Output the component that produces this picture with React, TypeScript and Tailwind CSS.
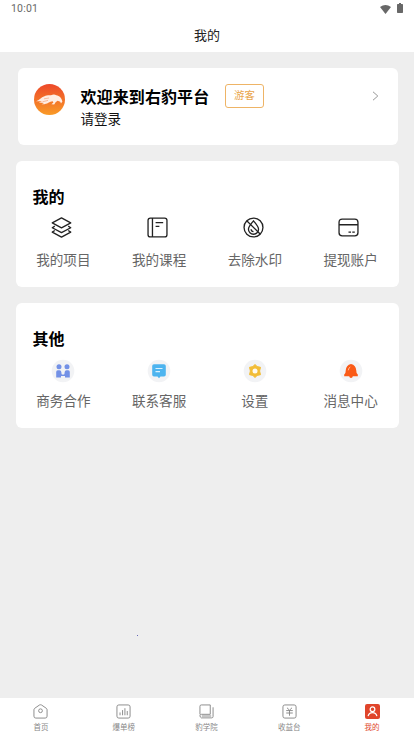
import type { ReactNode } from "react";

const projectItems = [
    {
        label: "我的项目",
        icon: (
            <>
            <path d="M10 .9 18.8 5.6 10 10.3 1.2 5.6Z" />
            <path d="M3.6 8.7 1.2 10.2 10 14.9 18.8 10.2 16.4 8.7" />
            <path d="M3.6 12.9 1.2 14.4 10 19.1 18.8 14.4 16.4 12.9" />
            </>
        ),
    },
    {
        label: "我的课程",
        icon: (
            <>
            <rect x="1" y="1" width="18" height="18" rx="2.2" />
            <path d="M5.2 1V19M8.2 5.3H15.4M8.2 9H11.8" />
            </>
        ),
    },
    {
        label: "去除水印",
        icon: (
            <>
            <circle cx="10" cy="10" r="9" />
            <path d="M10 3.6C12.4 6.7 14.8 9.2 14.8 11.6A4.8 4.8 0 0 1 5.2 11.6C5.2 9.2 7.6 6.7 10 3.6Z" />
            <path d="M3.8 3.8 16.3 16.2M7.7 11.7A2.5 2.5 0 0 0 10 14" />
            </>
        ),
    },
    {
        label: "提现账户",
        icon: (
            <>
            <rect x="1" y="2" width="18" height="16" rx="3" />
            <path d="M1 7.4H19M10 14.4H12.4M13.6 14.4H16" />
            </>
        ),
    },
];

const otherItems = [
    {
        label: "商务合作",
        icon: (
            <g fill="#7391e6">
            <circle cx="8" cy="7.7" r="2.5" />
            <circle cx="16" cy="7.7" r="2.5" />
            <path d="M5.2 13Q5.2 11.3 6.8 11.3H8.5Q10.2 11.3 10.3 13L10.6 15.2 12 15.8 13.4 15.2 13.7 13Q13.8 11.3 15.5 11.3H17.2Q18.8 11.3 18.8 13V18.6H14V17H10V18.6H5.2Z" />
            </g>
        ),
    },
    {
        label: "联系客服",
        icon: (
            <>
            <path d="M7 5.3H17Q18.8 5.3 18.8 7.1V15.7Q18.8 17.5 17 17.5H13.5L12 19.2 10.5 17.5H7Q5.2 17.5 5.2 15.7V7.1Q5.2 5.3 7 5.3Z" fill="#4db4ef" />
            <path d="M8.5 9.5H15.5M8.5 12.6H13" stroke="#d9f1ff" strokeWidth="1.1" />
            </>
        ),
    },
    {
        label: "设置",
        icon: (
            <>
            <path d="M12 5.4 14.1 7.6 17.5 8.3 16.6 12 17.5 15.7 14.1 16.4 12 18.6 9.9 16.4 6.5 15.7 7.4 12 6.5 8.3 9.9 7.6Z" fill="#f2bd37" stroke="#f2bd37" strokeLinejoin="round" />
            <circle cx="12" cy="12" r="2.5" fill="#fffaf0" />
            </>
        ),
    },
    {
        label: "消息中心",
        icon: (
            <>
            <path d="M12 5C15.4 5.7 17 8.2 17.2 11L17.6 14 18.8 15.5V17.2H5.2V15.5L6.4 14 6.8 11C7 8.2 8.6 5.7 12 5Z" fill="#fa5a16" />
            <path d="M10.2 17H13.8Q13.6 19 12 19T10.2 17Z" fill="#fa5a16" />
            <path d="M9.3 11.3Q9.5 8.8 11.3 8" stroke="#ffc5a5" strokeWidth="0.9" fill="none" />
            </>
        ),
    },
];

const tabs = [
    {
        label: "首页",
        icon: (
            <>
            <path d="M8 .8Q8.7 .8 9.3 1.2L14.2 4.6Q15 5.2 15 6.2V13Q15 15 13 15H3Q1 15 1 13V6.2Q1 5.2 1.8 4.6L6.7 1.2Q7.3 .8 8 .8Z" />
            <circle cx="8" cy="7.2" r="2" />
            </>
        ),
    },
    {
        label: "爆单榜",
        icon: (
            <>
            <rect x="1" y="1" width="14" height="14" rx="2" />
            <path d="M4.3 9V12M7 6.5V12M9.5 4.5V12M12 7.5V12" />
            </>
        ),
    },
    {
        label: "豹学院",
        icon: (
            <>
            <path d="M1 11V2.5Q1 1 2.5 1H12V11H2.5Q1 11 1 12.5T2.5 14.8H13.5Q15 14.8 15 13.3V3.5" />
            <path d="M3 12.8H13" />
            </>
        ),
    },
    {
        label: "收益台",
        icon: (
            <>
            <rect x="1" y="1" width="14" height="14" rx="2" />
            <path d="M5.3 4 8 6.6 10.7 4M4.5 7H11.5M4.5 9.6H11.5M8 6.6V12.5" />
            </>
        ),
    },
    {
        label: "我的",
        active: true,
        icon: (
            <>
            <rect x="0" y="0" width="16" height="16" rx="2.2" fill="#e0452b" stroke="none" />
            <circle cx="8" cy="5.6" r="2.5" stroke="#fff" strokeWidth="1.3" />
            <path d="M3.3 13Q4.2 9.2 8 9.2T12.7 13" stroke="#fff" strokeWidth="1.3" />
            </>
        ),
    },
];

function Section({ title, children }: { title: string; children: ReactNode }) {
    return (
        <section className="mx-auto mt-4 h-[125.5px] w-[383px] rounded-md bg-white pt-[23px]">
        <h2 className="ml-[17px] h-[25px] text-base leading-6 font-bold text-black">{title}</h2>
        <div className="grid grid-cols-4">{children}</div>
        </section>
    );
}

export default function App() {
    return (
        <div
        lang="zh-CN"
        className="flex h-[737px] w-[414px] flex-col overflow-hidden bg-[#eeeeee] font-['Noto_Sans_CJK_SC',sans-serif]"
        >
        <header className="h-[52px] shrink-0 bg-white">
        <div className="flex h-[18px] items-center pr-[11px] pl-[11px] text-[#686868]">
        <span className="font-['Roboto',sans-serif] text-[10.5px] tracking-[0.2px]">10:01</span>
        <svg className="ml-auto h-[9px] w-[11px]" viewBox="0 0 11 9" fill="currentColor">
        <path d="M0 2Q5.5-2 11 2L5.5 9Z" />
        </svg>
        <svg className="mt-[-2px] ml-[6px] h-[10px] w-[6px]" viewBox="0 0 6 10" fill="currentColor">
        <path d="M2 0H4V1H5.3Q6 1 6 1.7V9.3Q6 10 5.3 10H.7Q0 10 0 9.3V1.7Q0 1 .7 1H2Z" />
        </svg>
        </div>
        <h1 className="h-[34px] text-center text-[13px] leading-[34px] text-[#222]">我的</h1>
        </header>

        <main className="flex-1">
        <section className="mt-4 ml-[18px] flex h-[77px] w-[380px] items-start rounded-md bg-white pt-4 pr-[19px] pl-[15.5px]">
        <svg className="size-[31px] shrink-0" viewBox="0 0 31 31">
        <defs>
        <linearGradient id="avatar" x1="0" y1="0" x2="0" y2="1">
        <stop offset="0" stopColor="#ed482a" />
        <stop offset="1" stopColor="#f99b27" />
        </linearGradient>
        </defs>
        <circle cx="15.5" cy="15.5" r="15.5" fill="url(#avatar)" />
        <path d="M2 17.2C5.5 16.4 7 13.2 10.5 12.2 12 11 15 11.2 17 11.2 19 10.2 21 10.2 22.2 11.2 25.5 11.4 27.8 14.5 28.4 17.6L27 19.6 26.2 17.8 23.6 16.8 21.6 18.2 20.2 20.4 17.4 20.2 19.4 18.4 18.6 17.2C15.5 17.4 13 20.8 7.5 20.2L10 19 4.8 18.6 8 17.3Z" fill="#ffede3" />
        <path d="M8.5 17.8 14 16.4M10 14.8 15 14" stroke="#f39a71" strokeWidth="0.6" />
        </svg>
        <div className="ml-4">
        <div className="flex h-6 items-center">
        <strong className="w-[129px] text-base font-bold tracking-[0.1px] whitespace-nowrap text-black">欢迎来到右豹平台</strong>
        <span className="ml-[15.5px] flex h-6 w-[39px] items-center justify-center rounded-[3px] border border-[#eeb466] pb-[2px] text-[10.4px] text-[#e9a54a]">游客</span>
        </div>
        <p className="text-[13.5px] leading-5 text-[#111]">请登录</p>
        </div>
        <svg className="mt-[7px] ml-auto h-[10px] w-[7px]" viewBox="0 0 7 10" fill="none" stroke="#999">
        <path d="M1 .8 5.8 5 1 9.2" />
        </svg>
        </section>

        <Section title="我的">
        {projectItems.map((item) => (
            <div key={item.label} className="flex flex-col items-center pt-2">
            <svg className="mr-[3.5px] size-[21px]" viewBox="0 0 20 20" fill="none" stroke="#222" strokeWidth="1.25" strokeLinejoin="round">
            {item.icon}
            </svg>
            <span className="mt-[11px] text-[13.6px] leading-5 text-[#666]">{item.label}</span>
            </div>
        ))}
        </Section>

        <Section title="其他">
        {otherItems.map((item) => (
            <div key={item.label} className="flex flex-col items-center pt-2">
            <svg className="size-6" viewBox="0 0 24 24" fill="none">
            <circle cx="12" cy="12" r="11.3" fill="#f2f3f5" />
            {item.icon}
            </svg>
            <span className="mt-[7px] text-[13.6px] leading-5 text-[#666]">{item.label}</span>
            </div>
        ))}
        </Section>

        <div className="mt-[207px] ml-[137px] size-px bg-[#6668b8]" />
        </main>

        <nav className="grid h-[39px] shrink-0 grid-cols-5 bg-white">
        {tabs.map((tab) => (
            <div
            key={tab.label}
            className={`flex flex-col items-center pt-[5.5px] pr-px ${tab.active ? "text-[#e0452b]" : "text-[#888]"}`}
            >
            <svg className="size-[15px]" viewBox="0 0 16 16" fill="none" stroke="currentColor" strokeLinejoin="round">
            {tab.icon}
            </svg>
            <span className="mt-[3px] text-[7.5px] leading-[10px]">{tab.label}</span>
            </div>
        ))}
        </nav>
        </div>
    );
}
